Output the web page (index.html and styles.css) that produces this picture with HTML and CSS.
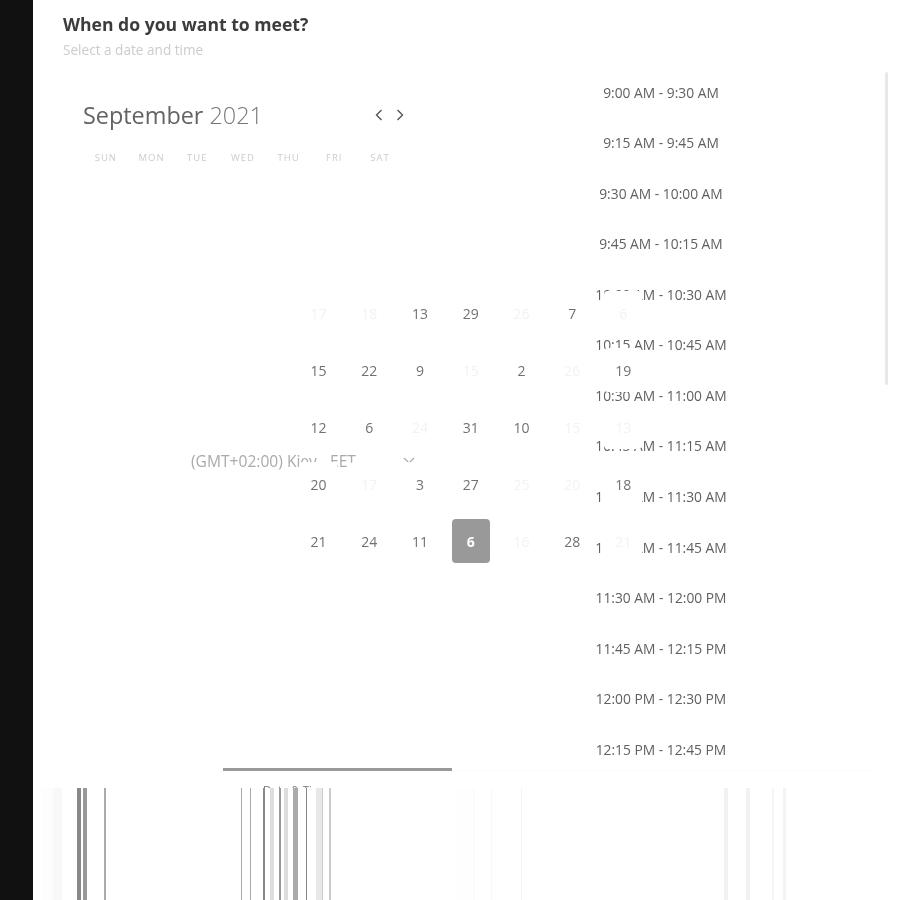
FILE: index.html
```html
<!DOCTYPE html>
<html lang="en" dir="ltr">
<head>
  <meta charset="utf-8">
  <title>When do you want to meet?</title>
  <link rel="stylesheet" href="styles.css">
</head>
<body>

<div class="sidebar"></div>

<div class="main">
  <div class="header">
    <div class="title">When do you want to meet?</div>
    <div class="subtitle">Select a date and time</div>
  </div>

  <div class="content">
    <div class="calendar">
      <div class="month-row">
        <div class="month">September <span class="year">2021</span></div>
        <div class="nav">
          <svg width="8" height="12" viewBox="0 0 8 12"><path d="M6.5 1 L1.5 6 L6.5 11" fill="none" stroke="#555" stroke-width="1.4"/></svg>
          <svg width="8" height="12" viewBox="0 0 8 12"><path d="M1.5 1 L6.5 6 L1.5 11" fill="none" stroke="#555" stroke-width="1.4"/></svg>
        </div>
      </div>
      <div class="weekdays">
        <span>SUN</span><span>MON</span><span>TUE</span><span>WED</span><span>THU</span><span>FRI</span><span>SAT</span>
      </div>
      <div class="timezone">
        <span>(GMT+02:00) Kiev - EET</span>
        <svg class="chevron" width="12" height="8" viewBox="0 0 12 8"><path d="M1 1 L6 6 L11 1" fill="none" stroke="#aaa" stroke-width="1.2"/></svg>
      </div>
    </div>

    <div class="slots">
      <div class="slot">9:00 AM - 9:30 AM</div>
      <div class="slot">9:15 AM - 9:45 AM</div>
      <div class="slot">9:30 AM - 10:00 AM</div>
      <div class="slot">9:45 AM - 10:15 AM</div>
      <div class="slot">10:00 AM - 10:30 AM</div>
      <div class="slot">10:15 AM - 10:45 AM</div>
      <div class="slot">10:30 AM - 11:00 AM</div>
      <div class="slot">10:45 AM - 11:15 AM</div>
      <div class="slot">11:00 AM - 11:30 AM</div>
      <div class="slot">11:15 AM - 11:45 AM</div>
      <div class="slot">11:30 AM - 12:00 PM</div>
      <div class="slot">11:45 AM - 12:15 PM</div>
      <div class="slot">12:00 PM - 12:30 PM</div>
      <div class="slot">12:15 PM - 12:45 PM</div>
    </div>

    <div class="scrollbar"></div>

    <!-- the date cells sit over the timezone and the slots -->
    <div class="dates">
      <div class="day off">17</div><div class="day off">18</div><div class="day">13</div><div class="day">29</div><div class="day off">26</div><div class="day">7</div><div class="day off">6</div>
      <div class="day">15</div><div class="day">22</div><div class="day">9</div><div class="day off">15</div><div class="day">2</div><div class="day off">26</div><div class="day">19</div>
      <div class="day">12</div><div class="day">6</div><div class="day off">24</div><div class="day">31</div><div class="day">10</div><div class="day off">15</div><div class="day off">13</div>
      <div class="day">20</div><div class="day off">17</div><div class="day">3</div><div class="day">27</div><div class="day off">25</div><div class="day off">20</div><div class="day">18</div>
      <div class="day">21</div><div class="day">24</div><div class="day">11</div><div class="day picked">6</div><div class="day off">16</div><div class="day">28</div><div class="day off">21</div>
    </div>
  </div>

  <div class="stepper">
    <div class="step step-one"><div class="streaks"></div></div>
    <div class="step step-two">
      <div class="step-label">Date &amp; Time</div>
      <div class="streaks"></div>
    </div>
    <div class="step step-three"><div class="streaks"></div></div>
    <div class="step step-four"><div class="streaks"></div></div>
  </div>
</div>

</body>
</html>
```
FILE: styles.css
```css
html, body{
  margin: 0;
  height: 100%;
}

body{
  display: flex;
  height: 900px;
  overflow: hidden;
  background-color: #fff;
  font-family: "Open Sans", "Noto Sans", sans-serif;
  color: #555;
}

.sidebar{
  width: 33px;
  flex: none;
  background-color: #111;
}

.main{
  flex: 1;
  display: flex;
  flex-direction: column;
  min-width: 0;
  filter: blur(0.35px);
}

/* Header ================================================ */

.header{
  height: 67px;
  flex: none;
  box-sizing: border-box;
  padding: 11px 0 0 30px;
}

.title{
  font-size: 17.6px;
  line-height: 26px;
  font-weight: 700;
  color: #3c3c3c;
}

.subtitle{
  margin-top: 3px;
  font-size: 13.6px;
  line-height: 20px;
  color: #ccc;
}

/* Calendar ============================================== */

.content{
  position: relative;
  display: flex;
  height: 701px;
  flex: none;
  overflow: hidden;
}

.calendar{
  width: 478px;
  flex: none;
  box-sizing: border-box;
  padding: 30px 0 0 50px;
}

.month-row{
  display: flex;
  align-items: center;
  width: 321px;
  justify-content: space-between;
}

.month{
  font-size: 23.4px;
  line-height: 36px;
  color: #636363;
}

.year{
  font-weight: 300;
  color: #777;
}

.nav{
  display: flex;
  gap: 13px;
  margin-top: -1px;
}

.weekdays{
  display: grid;
  grid-template-columns: repeat(7, 45.7px);
  margin-top: 18px;
  font-size: 9.5px;
  line-height: 14px;
  letter-spacing: 1px;
  color: #ccc;
  text-align: center;
}

.timezone{
  display: flex;
  align-items: center;
  gap: 47px;
  margin: 284px 0 0 108px;
  font-size: 15.6px;
  line-height: 24px;
  color: #aaa;
  white-space: nowrap;
}

.chevron{
  flex: none;
}

.dates{
  position: absolute;
  left: 260px;
  top: 217.5px;
  display: grid;
  grid-template-columns: repeat(7, 50.8px);
  grid-auto-rows: 57px;
  place-items: center;
}

.day{
  width: 38px;
  height: 44px;
  display: flex;
  align-items: center;
  justify-content: center;
  border-radius: 4px;
  background-color: #fff;
  font-size: 14px;
  color: #717171;
}

.off{
  color: #f2f2f2;
}

.picked{
  background-color: #999;
  color: #fff;
  font-weight: 700;
}

/* Time slots ============================================ */

.slots{
  width: 300px;
  flex: none;
}

.slot{
  height: 50.54px;
  display: flex;
  align-items: center;
  justify-content: center;
  font-size: 13.8px;
  color: #606060;
}

.scrollbar{
  position: absolute;
  right: 12px;
  top: 5px;
  width: 3px;
  height: 313px;
  border-radius: 2px;
  background-color: #e8e8e8;
}

/* Stepper, the label bars run down to the window edge == */

.stepper{
  flex: 1;
  display: flex;
}

.step{
  display: flex;
  flex-direction: column;
  flex: none;
  border-top: 3px solid transparent;
  padding-top: 17px;
}

.streaks{
  flex: 1;
}

.step-one{
  width: 190px;
}

.step-one .streaks{
  background: linear-gradient(to right,
    #fff 9px, #fdfdfd 9px, #fdfdfd 20px, #f8f8f8 20px, #f8f8f8 29px, #fff 29px,
    #fff 44px, #888 44px, #888 48px, #fff 48px,
    #fff 50px, #999 50px, #999 54px, #fff 54px,
    #fff 71px, #aaa 71px, #aaa 73px, #fff 73px);
}

.step-two{
  width: 229px;
  border-top-color: #999;
  padding-top: 14px;
}

.step-label{
  height: 3px;
  overflow: hidden;
  padding-left: 40px;
  font-size: 11.5px;
  line-height: 10px;
  color: #777;
}

.step-two .streaks{
  background: linear-gradient(to right,
    #fff 18px, #aaa 18px, #aaa 19px, #fff 19px,
    #fff 27px, #aaa 27px, #aaa 28px, #fff 28px,
    #fff 40px, #888 40px, #888 42px, #fff 42px,
    #fff 47px, #ddd 47px, #ddd 51px, #fff 51px,
    #fff 56px, #999 56px, #999 58px, #fff 58px,
    #fff 61px, #ddd 61px, #ddd 65px, #fff 65px,
    #fff 70px, #aaa 70px, #aaa 75px, #fff 75px,
    #fff 83px, #888 83px, #888 84px, #fff 84px,
    #fff 93px, #e8e8e8 93px, #e8e8e8 99px, #ccc 99px, #ccc 100px, #fff 100px,
    #fff 106px, #ccc 106px, #ccc 108px, #fff 108px);
}

.step-three{
  width: 229px;
  border-top: 1px solid #fbfbfb;
  margin-top: 2px;
}

.step-three .streaks{
  background: linear-gradient(to right,
    #fff 4px, #fefefe 4px, #fefefe 22px, #f9f9f9 22px, #f9f9f9 23px, #fff 23px,
    #fff 39px, #f7f7f7 39px, #f7f7f7 40px, #fff 40px,
    #fff 69px, #f3f3f3 69px, #f3f3f3 70px, #fff 70px);
}

.step-four{
  width: 194px;
  border-top: 1px solid #fbfbfb;
  margin-top: 2px;
}

.step-four .streaks{
  background: linear-gradient(to right,
    #fff 43px, #f1f1f1 43px, #f1f1f1 47px, #fff 47px,
    #fff 65px, #f1f1f1 65px, #f1f1f1 69px, #fff 69px,
    #fff 91px, #f5f5f5 91px, #f5f5f5 93px, #fff 93px,
    #fff 102px, #f3f3f3 102px, #f3f3f3 105px, #fff 105px);
}
```
